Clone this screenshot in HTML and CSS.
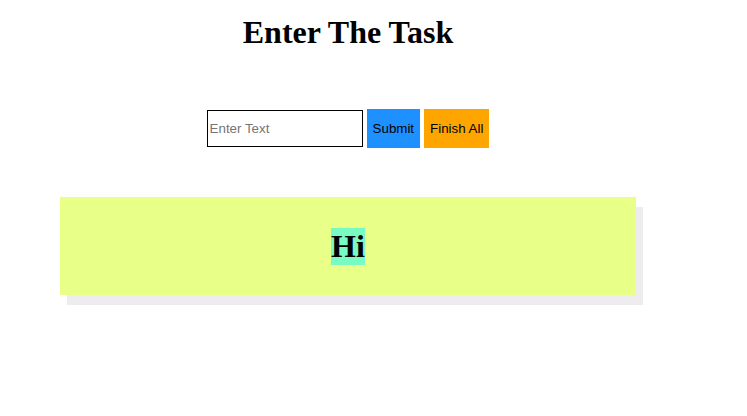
FILE: index.html
```html
<!DOCTYPE html>
<html>
<head>
<meta charset="utf-8">
<link rel="stylesheet" href="styles.css">
</head>
<body>
<main class="app">
  <h1 class="title">Enter The Task</h1>
  <div class="form-row">
    <input class="task-input" type="text" placeholder="Enter Text">
    <button class="btn btn-submit">Submit</button>
    <button class="btn btn-finish">Finish All</button>
  </div>
  <section class="card">
    <span class="task-text">Hi</span>
  </section>
</main>
</body>
</html>
```
FILE: styles.css
```css
html, body {
  margin: 0;
  padding: 0;
  background: #ffffff;
}
.app {
  width: 696px;
  padding-bottom: 40px;
  display: flex;
  flex-direction: column;
  align-items: center;
  font-family: "Liberation Serif", "Times New Roman", serif;
}
.title {
  margin: 14px 0 0;
  font-size: 32px;
  font-weight: bold;
  line-height: 37px;
  color: #000;
}
.form-row {
  margin-top: 58px;
  display: flex;
  align-items: center;
  gap: 4px;
}
.task-input {
  box-sizing: border-box;
  width: 156px;
  height: 37px;
  padding: 1px 2px;
  border: 1px solid #000;
  font-family: "Liberation Sans", Arial, sans-serif;
  font-size: 13.333px;
  outline: none;
}
.task-input::placeholder {
  color: #757575;
}
.btn {
  box-sizing: border-box;
  height: 39px;
  padding: 0 6px;
  border: none;
  font-family: "Liberation Sans", Arial, sans-serif;
  font-size: 13.333px;
  color: #000;
}
.btn-submit {
  background: #1e90ff;
}
.btn-finish {
  background: #ffa500;
}
.card {
  box-sizing: border-box;
  margin-top: 49px;
  width: 576px;
  height: 98px;
  background: #e8ff88;
  box-shadow: 7px 10px 0 #eeecee;
  display: flex;
  justify-content: center;
  align-items: center;
}
.task-text {
  background: #77fbc2;
  font-size: 32px;
  font-weight: bold;
  line-height: 37px;
  color: #000;
}
```
